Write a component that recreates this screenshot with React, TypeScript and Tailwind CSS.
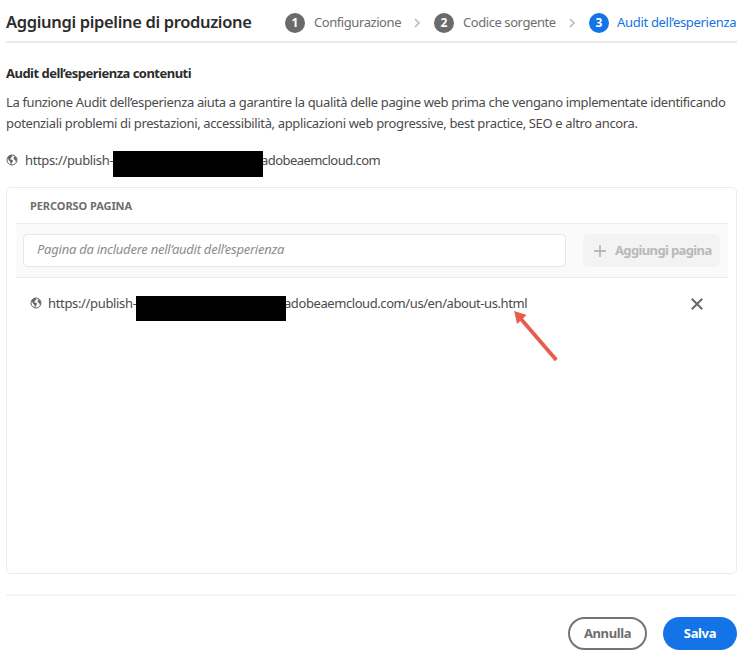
function Globe() {
  return (
    <svg viewBox="0 0 12 12" className="size-[12px] shrink-0" fill="none">
      <circle cx="6" cy="6" r="5" stroke="#636363" strokeWidth="1" />
      <path
        d="M1.6 3.6 3.4 1.6 6.2 1.2 6.6 2.2 5.2 3 5.4 4 4.2 4.4 4.2 5.4 5.6 5.6 7 6.6 6.6 8 5.8 8.8 5.4 10.6 4.6 10 4.4 8 3 6.6 2.2 5ZM8.2 2.2 10 3.4 10.8 5.6 10.2 8 9.4 7.2 9.2 5.8 7.8 5.4 7.6 4Z"
        fill="#636363"
      />
    </svg>
  );
}

function Separator({ className }: { className: string }) {
  return (
    <svg viewBox="0 0 6 10" className={`h-[10px] w-[6px] shrink-0 ${className}`} fill="none">
      <path d="M1 1 5 5 1 9" stroke="#bcbcbc" strokeWidth="1.7" />
    </svg>
  );
}

function StepNumber({ value, className }: { value: number; className: string }) {
  return (
    <span
      className={`flex size-[20px] shrink-0 items-center justify-center rounded-full text-[12px] leading-none font-bold text-white ${className}`}
    >
      {value}
    </span>
  );
}

export default function App() {
  return (
    <main
      className="relative flex h-[661px] w-[746px] flex-col overflow-hidden bg-white pr-[9px] pl-[6px] text-[13px] whitespace-nowrap text-[#4b4b4b]"
      style={{ fontFamily: '"Noto Sans", "Open Sans", sans-serif' }}
    >
      <header className="flex h-[43px] shrink-0 items-center border-b-2 border-[#eaeaea] pt-[4px]">
        <h1 className="w-[279px] text-[16.5px] font-semibold tracking-[-0.34px] text-[#2c2c2c]">
          Aggiungi pipeline di produzione
        </h1>
        <StepNumber value={1} className="bg-[#6a6a6a]" />
        <span className="mt-[1px] ml-[9px] w-[87px] tracking-[-0.43px] text-[#6e6e6e]">Configurazione</span>
        <Separator className="ml-[13px]" />
        <StepNumber value={2} className="ml-[14px] bg-[#6a6a6a]" />
        <span className="mt-[1px] ml-[9px] w-[92px] tracking-[-0.43px] text-[#6e6e6e]">Codice sorgente</span>
        <Separator className="ml-[14px]" />
        <StepNumber value={3} className="ml-[14px] bg-[#1473e6]" />
        <span className="mt-[1px] ml-[8px] tracking-[-0.31px] text-[#1473e6]">Audit dell’esperienza</span>
      </header>

      <h2 className="mt-[20px] h-[20px] shrink-0 leading-[20px] font-bold tracking-[-0.52px] text-[#2c2c2c]">
        Audit dell’esperienza contenuti
      </h2>
      <p className="mt-[9px] shrink-0 leading-[21px] tracking-[-0.36px]">
        La funzione Audit dell’esperienza aiuta a garantire la qualità delle pagine web prima che vengano implementate identificando
        <br />
        potenziali problemi di prestazioni, accessibilità, applicazioni web progressive, best practice, SEO e altro ancora.
      </p>

      <div className="mt-[17px] flex h-[26px] shrink-0 items-start">
        <span className="mt-[3px]">
          <Globe />
        </span>
        <span className="-mt-[1px] ml-[7px] w-[88px] leading-[20px] tracking-[-0.36px]">https://publish-</span>
        <span className="z-10 h-[26px] w-[150px] bg-black" />
        <span className="-mt-[1px] -ml-[2px] leading-[20px] tracking-[-0.55px]">adobeaemcloud.com</span>
      </div>

      <section className="mt-[10px] flex h-[387px] w-[731px] shrink-0 flex-col rounded-[5px] border-[1.5px] border-[#ebebeb] pr-[8px] pl-[9px]">
        <h3 className="flex h-[35px] shrink-0 items-center pt-[1px] pl-[14px] text-[11px] font-bold tracking-[-0.07px] text-[#6e6e6e]">
          PERCORSO PAGINA
        </h3>
        <div className="flex h-[55px] w-[712px] shrink-0 items-center border-y border-[#ececec] bg-[#fafafa] pl-[7px]">
          <div className="flex h-[33px] w-[543px] items-center rounded-[4px] border border-[#e6e6e6] bg-white pb-[1px] pl-[13px] tracking-[-0.25px] text-[#8c8c8c] italic">
            Pagina da includere nell’audit dell’esperienza
          </div>
          <button className="ml-[17px] flex h-[33px] w-[137px] items-center rounded-[5px] bg-[#f3f3f3] pl-[10px] font-bold tracking-[-0.63px] text-[#b9b9b9]">
            <svg viewBox="0 0 14 14" className="mr-[8px] size-[14px]" fill="none">
              <path d="M7 1v12M1 7h12" stroke="#b9b9b9" strokeWidth="1.8" />
            </svg>
            Aggiungi pagina
          </button>
        </div>
        <div className="mt-[17px] flex h-[26px] shrink-0 items-start pl-[14px]">
          <span className="mt-[2px]">
            <Globe />
          </span>
          <span className="-mt-[2px] ml-[6px] w-[88px] leading-[20px] tracking-[-0.34px]">https://publish-</span>
          <span className="z-10 mt-[1px] h-[25px] w-[150px] bg-black" />
          <span className="-mt-[2px] -ml-[2px] leading-[20px] tracking-[-0.42px]">adobeaemcloud.com/us/en/about-us.html</span>
          <svg viewBox="0 0 12 12" className="mt-[3px] mr-[25px] ml-auto size-[12px]" fill="none">
            <path d="M.8.8 11.2 11.2M11.2.8.8 11.2" stroke="#696969" strokeWidth="2" />
          </svg>
        </div>
      </section>

      <footer className="mt-[20px] flex shrink-0 justify-end border-t-2 border-[#f5f5f5] pt-[21px] font-bold">
        <button className="mr-[16px] flex h-[33px] w-[79px] items-center justify-center rounded-full border-2 border-[#747474] tracking-[-0.4px] text-[#6e6e6e]">
          Annulla
        </button>
        <button className="flex h-[33px] w-[74px] items-center justify-center rounded-full bg-[#1473e6] tracking-[-0.35px] text-white">
          Salva
        </button>
      </footer>

      <svg viewBox="0 0 46 52" className="absolute top-[310px] left-[513px] h-[52px] w-[46px]" fill="none">
        <path d="M8 9 43.3 50" stroke="#e85c4c" strokeWidth="3.8" />
        <path d="M1.2 1 13.6 5 4 14Z" fill="#e85c4c" />
      </svg>
    </main>
  );
}
